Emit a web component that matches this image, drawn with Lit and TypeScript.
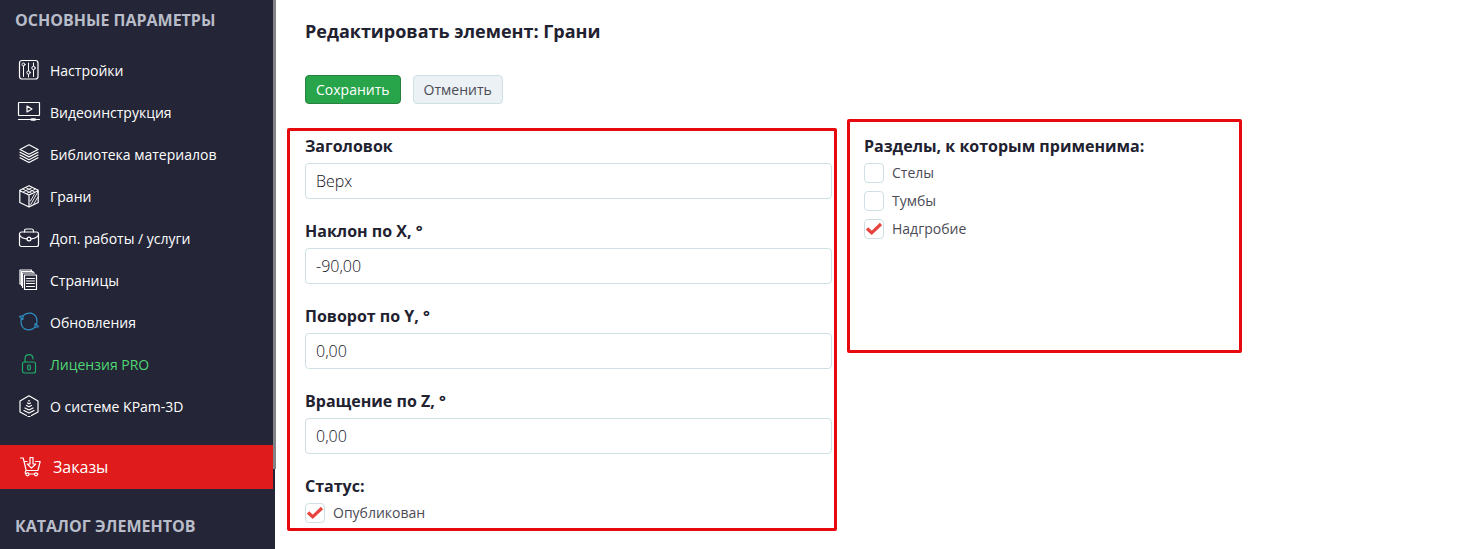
import { LitElement, html, svg, css } from "lit";
import { customElement, property } from "lit/decorators.js";

const icons = {
  settings: svg`<rect x="1.500" y="1.500" width="18.500" height="18.500" rx="2.500"/><g stroke-width="1"><circle cx="5.500" cy="5.500" r="1.500"/><path d="M5.500 7v10.500M10.500 4v8M10.500 15.500v2.500M15.500 4v3M15.500 11v6.500"/><circle cx="10.500" cy="13.500" r="1.700"/><circle cx="15.500" cy="9" r="1.700"/></g>`,
  video: svg`<rect x="0.500" y="1.500" width="21" height="13" rx="0.500"/><path d="M9 5v6l5-3zM0.500 18.500h21"/><rect x="13" y="17.800" width="4.500" height="1.400" rx="0.700"/>`,
  layers: svg`<path d="M11 1.800l9 4.700-9 4.700-9-4.700zM2 9.200l9 4.700 9-4.700M2 12l9 4.700 9-4.700M2 14.800l9 4.700 9-4.700"/>`,
  cube: svg`<path d="M11 .8l9.200 4.400v12.300L11 22 1.800 17.500V5.200zM1.800 5.700L11 10l9.200-4.300M11 10v12"/><path stroke-width="0.900" d="M5 4.200l8.500 4M8 2.800l8.500 4M5.500 6.700l8.500-4M9 8.300l8-4M12.500 16l4-7M12.500 20l7-12.500M15.500 19.500l4-7"/>`,
  briefcase: svg`<rect x="1.500" y="5" width="19" height="14.500" rx="2"/><path d="M6.500 5V4q0-2 2-2h5q2 0 2 2v1M1.500 8q2 3.500 7.500 3.800M13 11.800q5.500-.3 7.500-3.800"/><circle cx="11" cy="12" r="1.900"/>`,
  pages: svg`<path d="M6.500 6h12v14.500h-12zM4.500 18.500V4h12M4.500 16.500H3.500V2.500h11.500V4M3.500 15H2V1h11.500V2.500"/><path stroke-width="1" d="M8.500 9.500h8M8.500 12h8M8.500 14.500h8M8.500 17.500h8"/>`,
  update: svg`<path d="M6 4q3-2.500 7-1.800 6 1.500 6 8 0 1.500-.6 3M16 17q-3 2.500-7 1.700-6-1.600-6-8 0-1.500.5-3M1.500 5.500l3.700-.8-.4 3.800-1.500-1.300zM20.500 15.700l-3.700.8.400-3.800 1.500 1.300z"/>`,
  lock: svg`<rect x="4.500" y="9" width="13" height="11" rx="2"/><path d="M7 9V6q0-4.300 4-4.300T15 6"/><rect x="9.700" y="12" width="2.600" height="5" rx="1.200"/>`,
  about: svg`<path d="M8.500 20.500L2 17V6L11 .8l9 5.200v11l-6.500 3.500M10 21.500h2M10.500 5.800h1M9.500 8l1.500.8L12.500 8M8.500 10.500l2.500 1.200 2.500-1.200M7 13l4 2 4-2M6 15.500l5 2.500 5-2.500"/>`,
  cart: svg`<path d="M0.500 2h2.700l3 12.500h11.500M4.500 5.500H7M15.500 5.500h4.700l-2.200 8.500M10 1.500h3V8h2.700l-4.200 4.200L7.300 8H10zM6 14.500q-2 3.500 1 3.500h11"/><circle cx="7.500" cy="18.300" r="1.500" fill="#df1b1b"/><circle cx="16" cy="18.300" r="1.500" fill="#df1b1b"/>`,
};

@customElement("side-icon")
class SideIcon extends LitElement {
  @property() name: keyof typeof icons = "settings";
  static styles = css`
    :host { display: block; width: 22px; height: 22px; flex: none; }
    .glyph { display: block; fill: none; stroke: currentColor; stroke-width: 1.2; stroke-linejoin: round; stroke-linecap: round; }
  `;
  render() {
    return html`<svg class="glyph" width="22" height="22" viewBox="0 0 22 22" overflow="visible" aria-hidden="true">${icons[this.name]}</svg>`;
  }
}

const menu = [
  ["settings", "Настройки", ""],
  ["video", "Видеоинструкция", ""],
  ["layers", "Библиотека материалов", ""],
  ["cube", "Грани", ""],
  ["briefcase", "Доп. работы / услуги", ""],
  ["pages", "Страницы", ""],
  ["update", "Обновления", "update"],
  ["lock", "Лицензия PRO", "license"],
  ["about", "О системе KPam-3D", ""],
];

const fields = [
  ["title", "Заголовок", "Верх"],
  ["tilt", "Наклон по X, °", "-90,00"],
  ["turn", "Поворот по Y, °", "0,00"],
  ["spin", "Вращение по Z, °", "0,00"],
];

@customElement("app-root")
class AppRoot extends LitElement {
  static styles = css`
    :host {
      display: flex;
      height: 100vh;
      overflow: hidden;
      font-family: "Open Sans", sans-serif;
      font-size: 14px;
      color: #212130;
      background: #fff;
    }
    * { box-sizing: border-box; }
    .sidebar { display: flex; width: 276px; flex: none; }
    .nav { flex: 1; background: #242536; overflow: hidden; }
    .track { width: 3px; background: linear-gradient(90deg, #242536 2px, #fff 2px); }
    .thumb { height: 469px; background: #848387; }
    .group { margin: 0; padding: 0 15px; font-size: 16px; line-height: 24px; font-weight: 700; color: #b9bdc9; text-transform: uppercase; }
    .group.first { padding-top: 8px; }
    .list { list-style: none; margin: 17px 0 18px; padding: 0; }
    .link { display: flex; align-items: center; gap: 10px; height: 42px; padding: 0 18px; color: #fff; font-weight: 500; text-decoration: none; }
    .update side-icon { color: #2f8fc4; }
    .license { color: #4fd873; }
    .license side-icon { color: #20ac68; }
    .orders { display: flex; align-items: center; gap: 11px; height: 44px; margin-bottom: 25px; padding: 0 20px; background: #df1b1b; color: #fff; font-size: 16px; text-decoration: none; }
    .main { flex: 1; min-width: 0; padding: 19px 0 0 11px; }
    .head { padding-left: 18px; }
    .title { margin: 0 0 32px; font-size: 18px; line-height: 24px; font-weight: 700; }
    .actions { display: flex; gap: 12px; margin-bottom: 15px; }
    .btn { height: 29px; padding: 0 10px; border: 1px solid #cfe0e4; border-radius: 4px; background: #ebf1f4; color: #4b4b55; font: 400 14px/20px "Open Sans", sans-serif; }
    .btn.save { border-color: #26823c; background: #28a54b; color: #fff; font-weight: 500; }
    .columns { display: grid; grid-template-columns: minmax(0, 550fr) minmax(0, 395fr) minmax(0, 231fr); gap: 10px; align-items: start; }
    .frame { border: 3px solid #e60a0e; border-radius: 2px; }
    .params { margin-top: 9px; padding: 3px 2px 5px 15px; }
    .sections { min-height: 234px; padding: 12px 14px; }
    .field { margin-bottom: 20px; }
    .label { display: block; margin: 0 0 5px; padding: 0; font-size: 16px; line-height: 24px; font-weight: 700; }
    .input { display: block; width: 100%; height: 36px; padding: 0 10px; border: 1px solid #cfe0e4; border-radius: 4px; background: #fff; color: #12121c; font: 300 16px/24px "Open Sans", sans-serif; }
    .set { margin: 0; padding: 0; border: 0; min-width: 0; }
    .checks { display: grid; gap: 8px; }
    .check { display: flex; align-items: flex-start; gap: 8px; height: 20px; line-height: 19px; color: #4b4b55; }
    .box { appearance: none; width: 20px; height: 20px; flex: none; margin: 0; border: 1px solid #cfe0e4; border-radius: 4px; background: #fff; }
    .box:checked { background: #fff url('data:image/svg+xml,<svg xmlns="http://www.w3.org/2000/svg" viewBox="0 0 18 18"><path d="M2 8.500L6.700 12.800L16 4" fill="none" stroke="%23e8443f" stroke-width="3.200"/></svg>'); }
  `;

  private check(label: string, checked: boolean) {
    return html`<label class="check"><input class="box" type="checkbox" .checked=${checked} />${label}</label>`;
  }

  render() {
    return html`
      <aside class="sidebar">
        <nav class="nav">
          <h2 class="group first">Основные параметры</h2>
          <ul class="list">
            ${menu.map(([icon, text, kind]) => html`<li><a class="link ${kind}" href="#"><side-icon name=${icon}></side-icon>${text}</a></li>`)}
          </ul>
          <a class="orders" href="#"><side-icon name="cart"></side-icon>Заказы</a>
          <h2 class="group">Каталог элементов</h2>
        </nav>
        <div class="track"><div class="thumb"></div></div>
      </aside>
      <main class="main">
        <div class="head">
          <h1 class="title">Редактировать элемент: Грани</h1>
          <div class="actions">
            <button class="btn save" type="button">Сохранить</button>
            <button class="btn" type="button">Отменить</button>
          </div>
        </div>
        <div class="columns">
          <form class="frame params">
            ${fields.map(([id, label, value]) => html`<div class="field">
              <label class="label" for=${id}>${label}</label>
              <input class="input" id=${id} type="text" .value=${value} />
            </div>`)}
            <fieldset class="set">
              <legend class="label">Статус:</legend>
              ${this.check("Опубликован", true)}
            </fieldset>
          </form>
          <section class="frame sections">
            <fieldset class="set">
              <legend class="label">Разделы, к которым применима:</legend>
              <div class="checks">
                ${this.check("Стелы", false)}
                ${this.check("Тумбы", false)}
                ${this.check("Надгробие", true)}
              </div>
            </fieldset>
          </section>
        </div>
      </main>
    `;
  }
}
